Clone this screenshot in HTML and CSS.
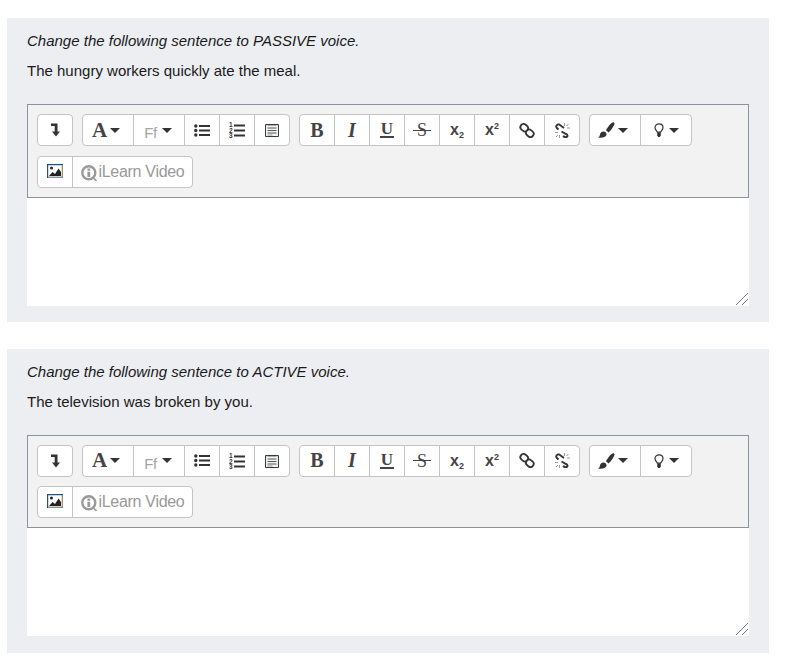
FILE: index.html
```html
<!DOCTYPE html>
<html lang="en">
<head>
    <meta charset="UTF-8">
    <meta name="viewport" content="width=device-width, initial-scale=1.0">
    <link rel="stylesheet" href="styles.css">
</head>
<body>
<!-- Toolbar icons, shared by both editors -->
<svg class="icon-defs" xmlns="http://www.w3.org/2000/svg">
    <symbol id="i-collapse" viewBox="0 0 11 14">
        <path d="M1 .5H7.500V8.500H10L6 13.500 2 8.500H4.700V3H1z" fill="#333"/>
    </symbol>
    <symbol id="i-ul" viewBox="0 0 16 13">
        <circle cx="1.800" cy="2" r="1.700" fill="#333"/>
        <circle cx="1.800" cy="6.500" r="1.700" fill="#333"/>
        <circle cx="1.800" cy="11" r="1.700" fill="#333"/>
        <path d="M5 1h11v2H5zM5 5.500h11v2H5zM5 10h11v2H5z" fill="#333"/>
    </symbol>
    <symbol id="i-ol" viewBox="0 0 16 16">
        <text x="0" y="5" class="ol-num">1</text>
        <text x="0" y="10.500" class="ol-num">2</text>
        <text x="0" y="16" class="ol-num">3</text>
        <path d="M5 2.500h11v2H5zM5 7.500h11v2H5zM5 12.500h11v2H5z" fill="#333"/>
    </symbol>
    <symbol id="i-note" viewBox="0 0 14 14">
        <path d="M.5 1.500h13v12H.5z" fill="#f3f3ea" stroke="#2d3c48"/>
        <path d="M2 2.500 3 1l1 1.500L5 1l1 1.500L7 1l1 1.500L9 1l1 1.500L11 1l1 1.500" fill="none" stroke="#2d3c48" stroke-width=".8"/>
        <path d="M2.500 5h9M2.500 7.500h9M2.500 10h9" stroke="#556"/>
        <path d="M2.500 12h5" stroke="#999"/>
    </symbol>
    <symbol id="i-link" viewBox="0 0 16 15">
        <g fill="none" stroke="#333" stroke-width="1.800">
            <rect x="1.200" y="1.500" width="8" height="6.400" rx="3.200" transform="rotate(40 5.200 4.700)"/>
            <rect x="6.800" y="7.100" width="8" height="6.400" rx="3.200" transform="rotate(40 10.800 10.300)"/>
        </g>
    </symbol>
    <symbol id="i-unlink" viewBox="0 0 15 15">
        <path d="M3.500 6.500 1.800 5C.3 3.200 2.200.8 4.300 1.500L9 5" fill="none" stroke="#333" stroke-width="1.900"/>
        <path d="M6.500 8.500 11 11c1.500.3 2.200 2.500.5 3-1.500.5-2.500-.3-3.500-1" fill="none" stroke="#333" stroke-width="1.900"/>
        <path d="M9.500 0v3M15 5h-3M13.500 1l-2 2" stroke="#9a9a9a"/>
        <path d="M0 9.500h3M4.500 15v-3M1 14l2-2" stroke="#9a9a9a"/>
    </symbol>
    <symbol id="i-brush" viewBox="0 0 17 16">
        <path d="M15 .3c1 0 1.800.8 1.500 1.800-1 2.500-3 6-6 8.400L8 8.200C9.500 5.500 12.500 1 15 .3zM5.500 9.500c1.700 0 3.300 1.300 3 3.300C8 15 4 16.500 0 15.500c1.300-.5 1.700-1.500 2-3 .3-1.800 1.800-3 3.500-3z" fill="#333"/>
    </symbol>
    <symbol id="i-bulb" viewBox="0 0 10 14">
        <path d="M3.300 9.200C3 7.700 1 6.800 1 4.500 1 2.300 2.800.8 5 .8s4 1.500 4 3.700C9 6.800 7 7.700 6.700 9.200z" fill="none" stroke="#333" stroke-width="1.200"/>
        <path d="M3.200 9.500h3.600v2.700L5.800 14H4.200L3.200 12.200z" fill="#333"/>
    </symbol>
    <symbol id="i-image" viewBox="0 0 16 14">
        <path d="M.6.600h14.800v12.800H.6z" fill="#fff" stroke="#2d4f6c" stroke-width="1.200"/>
        <path d="M2 12l3.500-4 2.500 2 3.500-5.500L14 8v4z" fill="#222"/>
        <circle cx="4.500" cy="4" r="1.500" fill="#222"/>
        <path d="M15.500 1v12.500H1" fill="none" stroke="#d09a50" stroke-width=".8"/>
    </symbol>
    <symbol id="i-info" viewBox="0 0 16 16">
        <circle cx="7.800" cy="7.800" r="6.500" fill="none" stroke="#999" stroke-width="2.400"/>
        <path d="M6.400 3.500h2.800v2.200H6.400zM6.400 6.700h2.800v5.300H6.400z" fill="#999"/>
        <path d="M12 12.500l3.500 3.500" stroke="#999" stroke-width="1.600"/>
    </symbol>
</svg>

<div class="question">
    <p class="prompt">Change the following sentence to PASSIVE voice.</p>
    <p class="sentence">The hungry workers quickly ate the meal.</p>
    <div class="editor">
        <div class="toolbar">
            <div class="btn-row">
                <div class="btn-group">
                    <span class="btn"><svg class="ico-collapse"><use href="#i-collapse"/></svg></span>
                </div>
                <div class="btn-group">
                    <span class="btn btn-wide btn-shift"><span class="glyph-a">A</span><span class="caret"></span></span>
                    <span class="btn btn-wide btn-font"><span class="glyph-ff">Ff</span><span class="caret"></span></span>
                    <span class="btn"><svg class="ico-ul"><use href="#i-ul"/></svg></span>
                    <span class="btn"><svg class="ico-ol"><use href="#i-ol"/></svg></span>
                    <span class="btn"><svg class="ico-note"><use href="#i-note"/></svg></span>
                </div>
                <div class="btn-group">
                    <span class="btn glyph-serif">B</span>
                    <span class="btn glyph-serif glyph-i">I</span>
                    <span class="btn glyph-serif"><span class="glyph-u">U</span></span>
                    <span class="btn glyph-serif"><span class="glyph-s">S</span></span>
                    <span class="btn glyph-x"><span>x<sub>2</sub></span></span>
                    <span class="btn glyph-x"><span>x<sup>2</sup></span></span>
                    <span class="btn"><svg class="ico-link"><use href="#i-link"/></svg></span>
                    <span class="btn"><svg class="ico-unlink"><use href="#i-unlink"/></svg></span>
                </div>
                <div class="btn-group">
                    <span class="btn btn-wide btn-shift"><svg class="ico-brush"><use href="#i-brush"/></svg><span class="caret"></span></span>
                    <span class="btn btn-wide btn-font"><svg class="ico-bulb"><use href="#i-bulb"/></svg><span class="caret"></span></span>
                </div>
            </div>
            <div class="btn-row">
                <div class="btn-group">
                    <span class="btn"><svg class="ico-image"><use href="#i-image"/></svg></span>
                    <span class="btn btn-video"><svg class="ico-info"><use href="#i-info"/></svg>iLearn Video</span>
                </div>
            </div>
        </div>
        <textarea class="answer"></textarea>
    </div>
</div>

<div class="question">
    <p class="prompt">Change the following sentence to ACTIVE voice.</p>
    <p class="sentence">The television was broken by you.</p>
    <div class="editor">
        <div class="toolbar">
            <div class="btn-row">
                <div class="btn-group">
                    <span class="btn"><svg class="ico-collapse"><use href="#i-collapse"/></svg></span>
                </div>
                <div class="btn-group">
                    <span class="btn btn-wide btn-shift"><span class="glyph-a">A</span><span class="caret"></span></span>
                    <span class="btn btn-wide btn-font"><span class="glyph-ff">Ff</span><span class="caret"></span></span>
                    <span class="btn"><svg class="ico-ul"><use href="#i-ul"/></svg></span>
                    <span class="btn"><svg class="ico-ol"><use href="#i-ol"/></svg></span>
                    <span class="btn"><svg class="ico-note"><use href="#i-note"/></svg></span>
                </div>
                <div class="btn-group">
                    <span class="btn glyph-serif">B</span>
                    <span class="btn glyph-serif glyph-i">I</span>
                    <span class="btn glyph-serif"><span class="glyph-u">U</span></span>
                    <span class="btn glyph-serif"><span class="glyph-s">S</span></span>
                    <span class="btn glyph-x"><span>x<sub>2</sub></span></span>
                    <span class="btn glyph-x"><span>x<sup>2</sup></span></span>
                    <span class="btn"><svg class="ico-link"><use href="#i-link"/></svg></span>
                    <span class="btn"><svg class="ico-unlink"><use href="#i-unlink"/></svg></span>
                </div>
                <div class="btn-group">
                    <span class="btn btn-wide btn-shift"><svg class="ico-brush"><use href="#i-brush"/></svg><span class="caret"></span></span>
                    <span class="btn btn-wide btn-font"><svg class="ico-bulb"><use href="#i-bulb"/></svg><span class="caret"></span></span>
                </div>
            </div>
            <div class="btn-row">
                <div class="btn-group">
                    <span class="btn"><svg class="ico-image"><use href="#i-image"/></svg></span>
                    <span class="btn btn-video"><svg class="ico-info"><use href="#i-info"/></svg>iLearn Video</span>
                </div>
            </div>
        </div>
        <textarea class="answer"></textarea>
    </div>
</div>
</body>
</html>
```

FILE: styles.css
```css
body {
    margin: 0;
    padding: 18px 17px 0 7px;
    background: #fff;
    font-family: "Liberation Sans", Arial, sans-serif;
    font-size: 15px;
    color: #1a1a1a;
}

.icon-defs {
    display: none;
}

.ol-num {
    font-family: "Liberation Sans", Arial, sans-serif;
    font-size: 6.5px;
    font-weight: bold;
    fill: #333;
}

.question {
    height: 304px;
    box-sizing: border-box;
    margin-bottom: 26.6px;
    padding: 15px 20px 0;
    background: #edeef2;
}

.prompt {
    margin: 0 0 14px;
    line-height: 16px;
    font-style: italic;
}

.sentence {
    margin: 0 0 25px;
    line-height: 16px;
}

.editor {
    width: 722px;
}

.toolbar {
    height: 93.6px;
    box-sizing: border-box;
    padding: 9px 9px 0;
    border: 1px solid #8d939e;
    background: #f2f2f2;
}

.btn-row {
    display: flex;
    gap: 9px;
    margin-bottom: 9.6px;
}

.btn-group {
    display: flex;
    height: 32px;
    box-sizing: border-box;
    border: 1px solid #c4c4c4;
    border-radius: 4px;
    background: #fff;
}

.btn {
    display: flex;
    align-items: center;
    justify-content: center;
    box-sizing: border-box;
    width: 35px;
    border-left: 1px solid #c4c4c4;
    color: #333;
}

.btn:first-child {
    width: 34px;
    border-left: 0;
}

.btn-wide {
    width: 51px;
    gap: 5px;
}

.btn-wide:first-child {
    width: 50px;
}

/* A and brush sit a little left of centre */
.btn-shift {
    gap: 3px;
    padding-right: 4px;
}

.btn-font {
    gap: 5px;
    padding-right: 2px;
}

.btn-font:has(svg) {
    padding-right: 0;
}

.btn-video {
    width: 120px;
    color: #999;
    font-size: 16px;
    letter-spacing: -0.3px;
}

.caret {
    width: 0;
    height: 0;
    border-top: 5px solid #333;
    border-left: 5px solid transparent;
    border-right: 5px solid transparent;
}

.glyph-a {
    font-family: "Liberation Serif", serif;
    font-size: 21px;
    font-weight: bold;
    color: #444;
}

.glyph-ff {
    font-size: 15px;
    color: #a5a5a5;
    margin-top: 5px;
    letter-spacing: -0.5px;
}

.glyph-serif {
    font-family: "Liberation Serif", serif;
    font-size: 20px;
    font-weight: bold;
    color: #444;
}

.glyph-i {
    font-style: italic;
}

.glyph-u {
    padding: 0 1px;
    border-bottom: 2px solid #444;
    font-size: 17px;
    line-height: 14px;
}

.glyph-s {
    padding: 0 4px;
    background: linear-gradient(#444, #444) center / 100% 1px no-repeat;
    font-size: 18px;
    font-weight: normal;
    line-height: 18px;
}

.glyph-x {
    font-size: 16px;
    font-weight: bold;
    color: #444;
}

.glyph-x sub,
.glyph-x sup {
    font-size: 9px;
    line-height: 0;
}

.glyph-x sub {
    vertical-align: -3px;
}

.glyph-x sup {
    vertical-align: 6px;
}

.ico-collapse { width: 11px; height: 14px; }
.ico-ul { width: 16px; height: 13px; }
.ico-ol { width: 16px; height: 16px; }
.ico-note { width: 14px; height: 14px; }
.ico-link { width: 16px; height: 15px; }
.ico-unlink { width: 15px; height: 15px; }
.ico-brush { width: 17px; height: 16px; }
.ico-bulb { width: 10px; height: 14px; }
.ico-image { width: 16px; height: 14px; margin-top: -2px; }
.ico-info { width: 16px; height: 16px; margin-top: 2px; margin-right: 2px; }

.answer {
    display: block;
    width: 100%;
    height: 108px;
    box-sizing: border-box;
    margin: 0;
    padding: 5px;
    border: 0;
    outline: none;
    background: #fff;
    resize: both;
}

/* two diagonal grip lines, as the reference's browser draws them */
.answer::-webkit-resizer {
    background: linear-gradient(135deg,
        transparent 8px, #777 8px, #777 9px, transparent 9px,
        transparent 12.2px, #777 12.2px, #777 13.2px, transparent 13.2px) 2px 2px / 12px 12px no-repeat;
}
```
